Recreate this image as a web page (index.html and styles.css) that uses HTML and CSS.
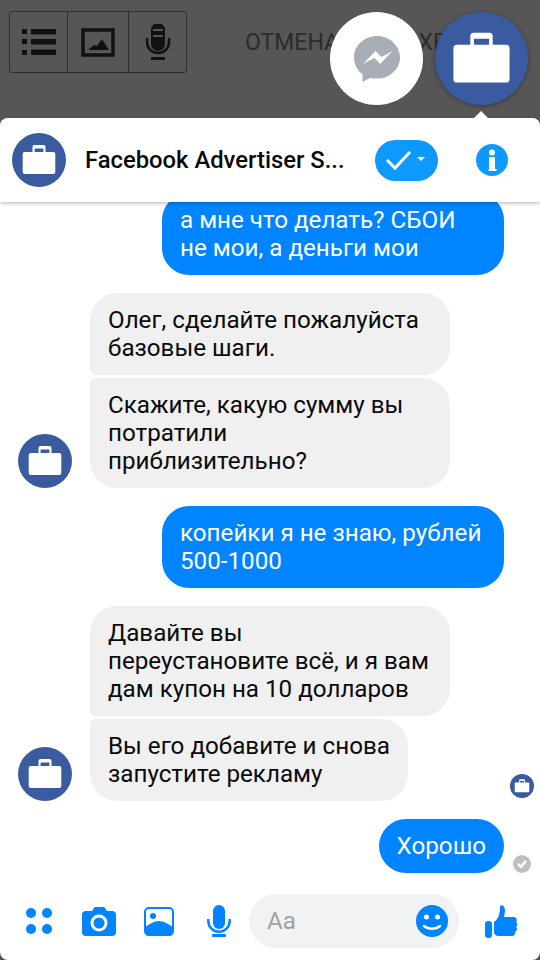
FILE: index.html
```html
<!DOCTYPE html>
<html lang="ru">
<head>
  <meta charset="UTF-8">
  <meta name="viewport" content="width=device-width, initial-scale=1.0">
  <title>Facebook Advertiser Support</title>
  <link rel="stylesheet" href="styles.css">
</head>
<body>
  <svg class="defs" width="0" height="0">
    <symbol id="case" viewBox="0 0 54 54">
      <path fill="#fff" d="M20.500 20v-6a2 2 0 0 1 2-2h9a2 2 0 0 1 2 2v6h-2.100v-4.500h-8.800V20z"/>
      <rect fill="#fff" x="10.700" y="19" width="32.600" height="22" rx="2"/>
    </symbol>
  </svg>

  <div class="screen">
    <div class="topbar">
      <div class="tools">
        <div class="tool">
          <svg width="34" height="26" viewBox="0 0 34 26" fill="#111">
            <rect x="0" y="0" width="5" height="5"/><rect x="9" y="0" width="25" height="5.500"/>
            <rect x="0" y="10" width="5" height="5"/><rect x="9" y="10" width="25" height="5.500"/>
            <rect x="0" y="21" width="5" height="5"/><rect x="9" y="20.500" width="25" height="5.500"/>
          </svg>
        </div>
        <div class="tool">
          <svg width="34" height="29" viewBox="0 0 34 29">
            <rect x="2" y="2" width="30" height="25" fill="none" stroke="#111" stroke-width="3.500"/>
            <path fill="#111" d="M7 22l6-5 3 1 5-7 7 11z"/>
          </svg>
        </div>
        <div class="tool">
          <svg width="26" height="36" viewBox="0 0 26 36">
            <path fill="#111" d="M6 5a6 5 0 0 1 14 0v15a7 7 0 0 1-14 0z"/>
            <rect x="8" y="5" width="10" height="2" fill="#565656"/>
            <rect x="8" y="11" width="10" height="2" fill="#565656"/>
            <path fill="none" stroke="#111" stroke-width="2.500" d="M2 14v4a11 11 0 0 0 22 0v-4"/>
            <rect x="6" y="33" width="14" height="3" fill="#111"/>
          </svg>
        </div>
      </div>
      <div class="actions"><span>ОТМЕНА</span><span>СОХРАНИТЬ</span></div>
    </div>

    <div class="float-btn float-msgr">
      <svg width="46" height="46" viewBox="0 0 46 46">
        <path fill="#a9adb6" d="M23 0C10.300 0 0 9.600 0 21.500c0 6.800 3.300 12.800 8.500 16.700V46l7.700-4.300c2.100.6 4.400.9 6.800.9 12.700 0 23-9.600 23-21.100S35.700 0 23 0z"/>
        <path fill="#fff" d="M9 28l12.500-13 6 6 11-6-12.300 13-6-6z"/>
      </svg>
    </div>
    <div class="float-btn float-page">
      <svg width="93" height="93"><use href="#case"/></svg>
    </div>
    <div class="caret"></div>

    <div class="panel">
      <div class="head">
        <svg class="avatar" width="54" height="54"><use href="#case"/></svg>
        <div class="title">Facebook Advertiser S...</div>
        <div class="toggle">
          <svg width="42" height="22" viewBox="0 0 42 22">
            <path fill="none" stroke="#fff" stroke-width="3" d="M1 11l8 8L24 3"/>
            <path fill="#fff" d="M31 8h8l-4 4z"/>
          </svg>
        </div>
        <svg class="info" width="32" height="32" viewBox="0 0 32 32">
          <circle cx="16" cy="16" r="16" fill="#0d99ff"/>
          <circle cx="16" cy="8.500" r="3" fill="#fff"/>
          <path fill="#fff" d="M13 13h6v12h1.500v2h-8v-2H13z"/>
        </svg>
      </div>

      <div class="chat">
        <div class="row row-me">
          <div class="bubble bubble-me">а мне что делать? СБОИ не мои, а деньги мои</div>
        </div>

        <div class="row row-them">
          <svg class="avatar" width="54" height="54"><use href="#case"/></svg>
          <div class="group">
            <div class="bubble bubble-them first">Олег, сделайте пожалуйста базовые шаги.</div>
            <div class="bubble bubble-them last">Скажите, какую сумму вы потратили приблизительно?</div>
          </div>
        </div>

        <div class="row row-me">
          <div class="bubble bubble-me">копейки я не знаю, рублей 500-1000</div>
        </div>

        <div class="row row-them">
          <svg class="avatar" width="54" height="54"><use href="#case"/></svg>
          <div class="group">
            <div class="bubble bubble-them first wide">Давайте вы<br>переустановите всё, и я вам<br>дам купон на 10 долларов</div>
            <div class="bubble bubble-them last">Вы его добавите и снова<br>запустите рекламу</div>
          </div>
          <svg class="avatar seen" width="24" height="24"><use href="#case"/></svg>
        </div>

        <div class="row row-me">
          <div class="bubble bubble-me">Хорошо</div>
          <svg class="sent" width="18" height="18" viewBox="0 0 18 18">
            <circle cx="9" cy="9" r="9" fill="#bcc0c4"/>
            <path fill="none" stroke="#fff" stroke-width="2.500" d="M5 9l3 3 5-6"/>
          </svg>
        </div>
      </div>

      <div class="composer">
        <div class="slot">
          <svg width="26" height="26" viewBox="0 0 26 26" fill="#0084ff">
            <circle cx="5" cy="5" r="5"/><circle cx="21" cy="5" r="5"/>
            <circle cx="5" cy="21" r="5"/><circle cx="21" cy="21" r="5"/>
          </svg>
        </div>
        <div class="slot">
          <svg width="34" height="29" viewBox="0 0 34 29">
            <path fill="#0084ff" d="M4 4h6l2-3a2 2 0 0 1 2-1h7a2 2 0 0 1 2 1l2 3h5a4 4 0 0 1 4 4v17a4 4 0 0 1-4 4H4a4 4 0 0 1-4-4V8a4 4 0 0 1 4-4z"/>
            <circle cx="17" cy="16" r="7" fill="none" stroke="#fff" stroke-width="3"/>
          </svg>
        </div>
        <div class="slot">
          <svg width="30" height="29" viewBox="0 0 30 29">
            <rect x="1" y="1" width="28" height="27" rx="4" fill="#fff" stroke="#0084ff" stroke-width="2"/>
            <circle cx="9" cy="9" r="3" fill="#0084ff"/>
            <path fill="#0084ff" d="M1 20c5-3 9-6 14-6s9 3 14 6v5a4 4 0 0 1-4 4H5a4 4 0 0 1-4-4z"/>
          </svg>
        </div>
        <div class="slot">
          <svg width="24" height="32" viewBox="0 0 24 32">
            <rect x="6" y="0" width="12" height="24" rx="6" fill="#0084ff"/>
            <path fill="none" stroke="#0084ff" stroke-width="2.500" d="M1.300 14v2a10.700 10.700 0 0 0 21.400 0v-2"/>
            <rect x="5" y="29" width="14" height="3" rx="1" fill="#0084ff"/>
          </svg>
        </div>
        <div class="input">
          <span class="placeholder">Aa</span>
          <svg width="32" height="32" viewBox="0 0 32 32">
            <circle cx="16" cy="16" r="16" fill="#0084ff"/>
            <circle cx="10.500" cy="12" r="2.500" fill="#fff"/><circle cx="21.500" cy="12" r="2.500" fill="#fff"/>
            <path fill="none" stroke="#fff" stroke-width="2.500" stroke-linecap="round" d="M8 21c4 3.500 12 3.500 16 0"/>
          </svg>
        </div>
        <div class="slot slot-like">
          <svg width="32" height="33" viewBox="0 0 32 33" fill="#0084ff">
            <rect x="0" y="16" width="7" height="17" rx="3"/>
            <path d="M9 17c4-3 6-7 6-15 0-3 5-2 5 3 0 3-1 6-1 7h10a3 3 0 0 1 2 5 3 3 0 0 1 0 5 3 3 0 0 1-1 5 3 3 0 0 1-3 4H14a5 5 0 0 1-5-3z"/>
          </svg>
        </div>
      </div>
    </div>
  </div>
</body>
</html>
```

FILE: styles.css
```css
* { box-sizing: border-box; }
body {
  margin: 0;
  font-family: Roboto, "Noto Sans", sans-serif;
}
.defs { position: absolute; }
.screen {
  position: relative;
  width: 540px;
  height: 960px;
  overflow: hidden;
  display: flex;
  flex-direction: column;
  background-color: #565656;
}

/* top bar behind the chat head */
.topbar {
  height: 118px;
  flex-shrink: 0;
  display: flex;
  align-items: flex-start;
  padding: 11px 0 0 9px;
}
.tools {
  display: flex;
  height: 62px;
  border: 1px solid #2e2e2e;
  border-radius: 3px;
}
.tool {
  display: flex;
  align-items: center;
  justify-content: center;
  height: 100%;
  width: 61px;
  border-left: 1px solid #2e2e2e;
}
.tool:first-child { width: 57px; border-left: none; }
.tool:last-child { width: 58px; }
.actions {
  display: flex;
  gap: 49px;
  margin: 18px 0 0 58px;
  font-size: 23px;
  line-height: 28px;
  color: #2b2b2b;
  white-space: nowrap;
}

/* floating chat heads */
.float-btn {
  position: absolute;
  top: 12px;
  width: 93px;
  height: 93px;
  border-radius: 50%;
  display: flex;
  align-items: center;
  justify-content: center;
}
.float-msgr { left: 330px; background-color: #fff; }
.float-page {
  left: 435px;
  background-color: #3a5ba0;
  box-shadow: 0 1px 4px rgba(0, 0, 0, 0.35);
}
.caret {
  position: absolute;
  top: 111px;
  left: 473px;
  width: 0;
  height: 0;
  border-left: 8px solid transparent;
  border-right: 8px solid transparent;
  border-bottom: 8px solid #fff;
}

/* panel */
.panel {
  flex: 1;
  min-height: 0;
  display: flex;
  flex-direction: column;
  background-color: #fff;
  border-radius: 8px;
  overflow: hidden;
}
.avatar {
  flex-shrink: 0;
  border-radius: 50%;
  background-color: #3a5ba0;
}
.head {
  position: relative;
  z-index: 1;
  height: 84px;
  flex-shrink: 0;
  display: flex;
  align-items: center;
  padding-left: 12px;
  background-color: #fff;
  box-shadow: 0 1px 4px rgba(0, 0, 0, 0.3);
}
.title {
  width: 271px;
  margin-left: 19px;
  font-size: 23.8px;
  font-weight: 500;
  color: #0a0a0a;
  white-space: nowrap;
}
.toggle {
  width: 63px;
  height: 41px;
  margin-left: 19px;
  border-radius: 21px;
  background-color: #0d99ff;
  display: flex;
  align-items: center;
  justify-content: center;
}
.info { margin-left: 38px; }

/* messages */
.chat {
  flex: 1;
  min-height: 0;
  overflow: hidden;
  display: flex;
  flex-direction: column;
  justify-content: flex-end;
  gap: 18px;
}
.row {
  position: relative;
  flex-shrink: 0;
  display: flex;
}
.row-me { justify-content: flex-end; padding-right: 36px; }
.row-them { align-items: flex-end; gap: 18px; padding-left: 18px; }
.group {
  display: flex;
  flex-direction: column;
  align-items: flex-start;
  gap: 3px;
}
.bubble {
  padding: 13px 18px;
  font-size: 24.2px;
  line-height: 28px;
  border-radius: 27px;
}
.bubble-me {
  max-width: 342px;
  background-color: #0084ff;
  color: #fff;
}
.bubble-them {
  max-width: 360px;
  background-color: #f0f0f0;
  color: #0a0a0a;
}
.wide { width: 360px; }
.first { border-bottom-left-radius: 6px; }
.last { border-top-left-radius: 6px; }
.seen { position: absolute; right: 6px; bottom: 3px; }
.sent { position: absolute; right: 9px; bottom: 0; }

/* composer */
.composer {
  height: 87px;
  flex-shrink: 0;
  display: flex;
  align-items: flex-start;
  padding: 21px 0 0 9px;
}
.slot {
  width: 60px;
  height: 54px;
  flex-shrink: 0;
  display: flex;
  align-items: center;
  justify-content: center;
}
.slot-like { width: 81px; padding-left: 3px; }
.input {
  width: 210px;
  height: 54px;
  flex-shrink: 0;
  display: flex;
  align-items: center;
  justify-content: space-between;
  padding: 0 11px 0 18px;
  border-radius: 27px;
  background-color: #f1f2f3;
}
.placeholder { font-size: 24.2px; color: #a2a2a2; }
```
